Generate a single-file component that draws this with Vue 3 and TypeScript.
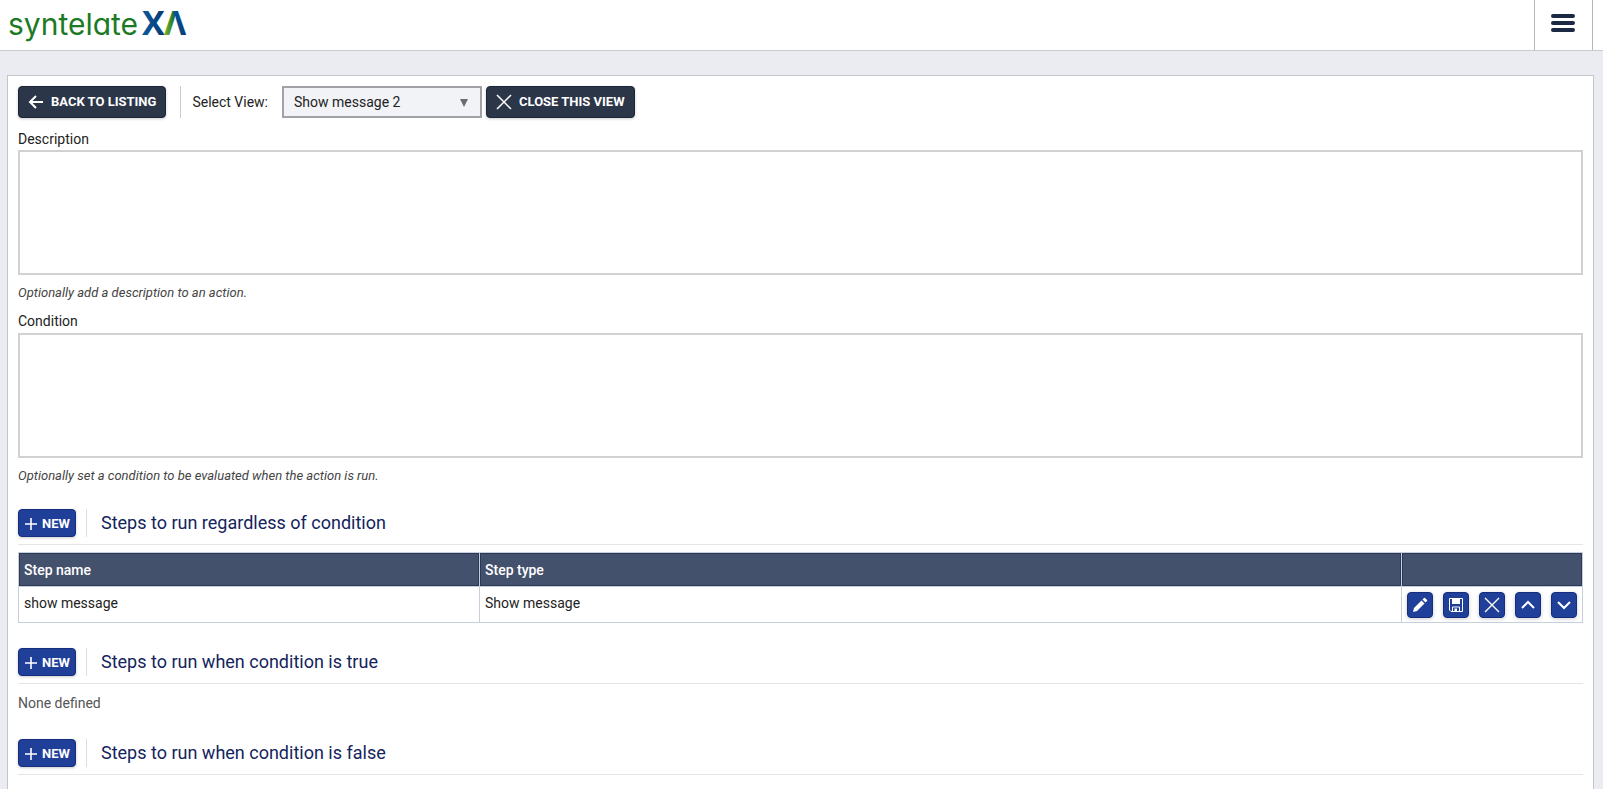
<script setup lang="ts">
import { ref } from 'vue'

interface Step {
  name: string
  type: string
}

interface Section {
  title: string
  steps: Step[]
  emptyText: string
}

const view = ref('Show message 2')
const description = ref('')
const condition = ref('')

const sections: Section[] = [
  {
    title: 'Steps to run regardless of condition',
    steps: [{ name: 'show message', type: 'Show message' }],
    emptyText: '',
  },
  { title: 'Steps to run when condition is true', steps: [], emptyText: 'None defined' },
  { title: 'Steps to run when condition is false', steps: [], emptyText: '' },
]
</script>

<template>
  <div class="page">
    <header class="topbar">
      <a class="logo" href="#" aria-label="syntelate XA">
        <svg width="184" height="44" viewBox="0 0 184 44">
          <defs>
            <linearGradient id="logo-x" x1="0" y1="0" x2="1" y2="0">
              <stop offset="0" stop-color="#0b5a9e" />
              <stop offset="1" stop-color="#07396f" />
            </linearGradient>
            <linearGradient id="logo-a" x1="0" y1="0" x2="1" y2="0">
              <stop offset="0" stop-color="#8cb82b" />
              <stop offset="0.4" stop-color="#1d7a2c" />
              <stop offset="0.44" stop-color="#0b529a" />
              <stop offset="1" stop-color="#07396f" />
            </linearGradient>
          </defs>
          <text class="logo-name" x="0" y="35" fill="#1c7a24">syntelate</text>
          <text class="logo-mark" x="134" y="35" fill="url(#logo-x)">X</text>
          <text class="logo-mark" x="156" y="35" fill="url(#logo-a)">Λ</text>
        </svg>
      </a>
      <button class="menu" type="button" aria-label="Menu">
        <svg width="24" height="20" viewBox="0 0 24 20">
          <path d="M2 3H22M2 10H22M2 17H22" stroke="#1c2942" stroke-width="4" stroke-linecap="round" />
        </svg>
      </button>
    </header>

    <main class="panel">
      <div class="toolbar">
        <button class="btn dark" type="button">
          <svg width="16" height="16" viewBox="0 0 16 16">
            <path d="M15 8H2M8 2L2 8L8 14" fill="none" stroke="#fff" stroke-width="2" />
          </svg>
          BACK TO LISTING
        </button>
        <div class="picker">
          <label for="view">Select View:</label>
          <span class="select-box">
            <select id="view" v-model="view">
              <option>Show message 2</option>
            </select>
            <svg class="caret" width="8" height="8" viewBox="0 0 8 8">
              <path d="M0 0H8L4 8Z" fill="#6b6d70" />
            </svg>
          </span>
        </div>
        <button class="btn dark close" type="button">
          <svg width="16" height="16" viewBox="0 0 16 16">
            <path d="M1 1L15 15M15 1L1 15" stroke="#fff" stroke-width="1.5" />
          </svg>
          CLOSE THIS VIEW
        </button>
      </div>

      <div class="field">
        <label for="description">Description</label>
        <textarea id="description" v-model="description"></textarea>
        <p>Optionally add a description to an action.</p>
      </div>
      <div class="field">
        <label for="condition">Condition</label>
        <textarea id="condition" v-model="condition"></textarea>
        <p>Optionally set a condition to be evaluated when the action is run.</p>
      </div>

      <section v-for="section in sections" :key="section.title">
        <div class="section-head">
          <button class="btn blue" type="button">
            <svg width="12" height="12" viewBox="0 0 12 12">
              <path d="M6 0V12M0 6H12" stroke="#fff" stroke-width="1.6" />
            </svg>
            NEW
          </button>
          <h2>{{ section.title }}</h2>
        </div>
        <table v-if="section.steps.length">
          <thead>
            <tr>
              <th class="col-name">Step name</th>
              <th>Step type</th>
              <th class="col-actions"></th>
            </tr>
          </thead>
          <tbody>
            <tr v-for="step in section.steps" :key="step.name">
              <td>{{ step.name }}</td>
              <td>{{ step.type }}</td>
              <td class="actions-cell">
                <div class="actions">
                  <button class="icon-btn" type="button" aria-label="Edit">
                    <svg width="16" height="16" viewBox="0 0 16 16">
                      <path d="M1 15L2 11L9.500 3.500L12.500 6.500L5 14Z" fill="#fff" />
                      <path d="M10.500 2.500L12 1Q12.500 .5 13 1L15 3Q15.500 3.500 15 4L13.500 5.500Z" fill="#fff" />
                    </svg>
                  </button>
                  <button class="icon-btn" type="button" aria-label="Save">
                    <svg width="16" height="16" viewBox="0 0 16 16">
                      <path d="M1.500 1.500H14.500V14.500H3L1.500 13Z" fill="none" stroke="#fff" />
                      <path d="M4 1.500H12V7H4Z" fill="#fff" />
                      <path d="M4.500 14.500V10H11.500V14.500" fill="none" stroke="#fff" />
                      <path d="M6.500 11.500H9V14.500H6.500Z" fill="#fff" />
                    </svg>
                  </button>
                  <button class="icon-btn" type="button" aria-label="Delete">
                    <svg width="16" height="16" viewBox="0 0 16 16">
                      <path d="M1 1L15 15M15 1L1 15" stroke="#fff" stroke-width="1.4" />
                    </svg>
                  </button>
                  <button class="icon-btn" type="button" aria-label="Move up">
                    <svg width="16" height="16" viewBox="0 0 16 16">
                      <path d="M2 11L8 5L14 11" fill="none" stroke="#fff" stroke-width="2" />
                    </svg>
                  </button>
                  <button class="icon-btn" type="button" aria-label="Move down">
                    <svg width="16" height="16" viewBox="0 0 16 16">
                      <path d="M2 5L8 11L14 5" fill="none" stroke="#fff" stroke-width="2" />
                    </svg>
                  </button>
                </div>
              </td>
            </tr>
          </tbody>
        </table>
        <p v-else-if="section.emptyText" class="empty">{{ section.emptyText }}</p>
      </section>
    </main>
  </div>
</template>

<style>
body {
  margin: 0;
  background: #ebecf1;
}
</style>

<style scoped>
* {
  box-sizing: border-box;
}
.page {
  display: flex;
  flex-direction: column;
  min-height: 100vh;
  background: #ebecf1;
  font: 14px/20px Roboto, 'Liberation Sans', sans-serif;
  color: #222;
}
button,
select,
textarea {
  font: inherit;
}
.topbar {
  display: flex;
  justify-content: space-between;
  height: 51px;
  padding: 0 10px 0 8px;
  background: #fff;
  border-bottom: 1px solid #c8cacf;
}
.logo svg {
  display: block;
}
.logo-name {
  font: 30px Inter, sans-serif;
  font-feature-settings: 'cv11';
}
.logo-mark {
  font: 700 34px 'Open Sans', sans-serif;
}
.menu {
  display: flex;
  justify-content: center;
  width: 59px;
  padding: 13px 2px 0 0;
  background: none;
  border: solid #b4b6bb;
  border-width: 0 1px;
}
.panel {
  flex: 1;
  margin: 24px 9px 0 7px;
  padding: 10px 10px 0;
  background: #fff;
  border: solid #c3c5ca;
  border-width: 1px 1px 0;
}
.toolbar {
  display: flex;
  align-items: center;
}
.btn {
  display: flex;
  align-items: center;
  color: #fff;
  font-size: 13px;
  font-weight: 700;
  border-radius: 4px;
  white-space: nowrap;
}
.btn svg,
.icon-btn svg {
  flex: none;
}
.dark {
  height: 32px;
  gap: 7px;
  padding: 0 9px;
  background: #2c3649;
  border: 1px solid #1d2536;
  box-shadow: 0 1px 3px #0003;
}
.picker {
  display: flex;
  align-items: center;
  gap: 14px;
  height: 32px;
  margin: 0 4px 0 14px;
  padding-left: 11px;
  border-left: 1px solid #c9cacd;
}
.select-box {
  position: relative;
}
select {
  appearance: none;
  display: block;
  width: 200px;
  height: 32px;
  padding: 0 26px 0 10px;
  color: #222;
  background: #f1f3f7;
  border: 2px solid #a0a2a6;
  border-radius: 0;
}
.caret {
  position: absolute;
  top: 13px;
  right: 14px;
  pointer-events: none;
}
.field label {
  display: block;
  padding: 11px 0 1px;
}
textarea {
  display: block;
  width: 100%;
  height: 125px;
  resize: none;
  background: #fff;
  border: 2px solid #d0d1d3;
}
.field p {
  margin: 8px 0 0;
  font-size: 13px;
  font-style: italic;
  color: #444;
}
.field + .field label {
  padding: 8px 0 2px;
}
.section-head {
  display: flex;
  align-items: center;
  margin-top: 23px;
  padding-bottom: 7px;
  border-bottom: 1px solid #e4e5e7;
}
.blue {
  width: 58px;
  height: 28px;
  gap: 5px;
  padding: 2px 0 0 6px;
  background: #203f99;
  border: 1px solid #142d7c;
  box-shadow: 0 1px 3px #0003;
}
h2 {
  margin: 0 0 0 10px;
  padding-left: 14px;
  font-size: 18px;
  font-weight: 400;
  line-height: 28px;
  color: #14245c;
  border-left: 1px solid #dcdde0;
}
table {
  width: 100%;
  margin: 7px 0 25px;
  table-layout: fixed;
  border-collapse: collapse;
}
th,
td {
  padding: 0 5px;
  border: 1px solid #c5d0da;
  text-align: left;
}
th {
  height: 34px;
  color: #fff;
  font-weight: 500;
  background: #44516c;
  box-shadow: inset 0 0 0 1px #2c3856;
}
td {
  height: 36px;
  padding-bottom: 3px;
}
.col-name {
  width: 461px;
}
.col-actions {
  width: 181px;
}
.actions {
  display: flex;
  justify-content: space-between;
}
.icon-btn {
  display: flex;
  align-items: center;
  justify-content: center;
  width: 26px;
  height: 26px;
  padding: 0;
  background: #203f99;
  border: 1px solid #142d7c;
  border-radius: 4px;
  box-shadow: 0 1px 4px #0003;
}
.actions-cell {
  padding: 0 5px 0 5px;
}
.empty {
  margin: 9px 0 26px;
  color: #555;
}
</style>
